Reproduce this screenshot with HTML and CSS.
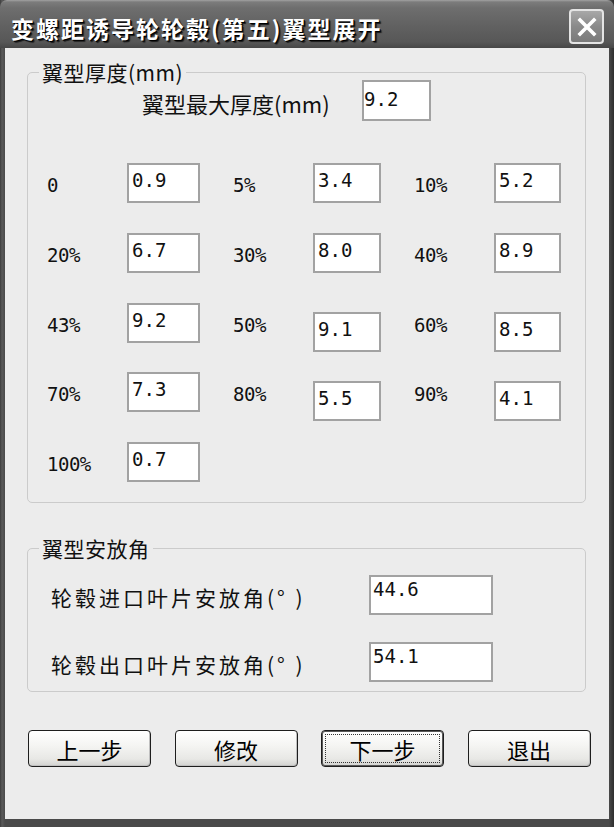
FILE: index.html
```html
<!DOCTYPE html>
<html lang="zh-CN">
<head>
<meta charset="utf-8">
<title>变螺距诱导轮轮毂(第五)翼型展开</title>
<link rel="stylesheet" href="styles.css">
</head>
<body>
<div class="window">
  <div class="titlebar">
    <span class="title">变螺距诱导轮轮毂(第五)翼型展开</span>
    <span class="close">
      <svg width="22" height="22" viewBox="0 0 22 22"><path d="M4 4 L18 18 M18 4 L4 18" stroke="#fff" stroke-width="3.6" stroke-linecap="square"/></svg>
    </span>
  </div>
  <div class="client">
    <div class="group">
      <div class="legend">翼型厚度(mm)</div>
      <div class="max-row">
        <span class="max-label">翼型最大厚度(mm)</span>
        <div class="field field-max">9.2</div>
      </div>
      <div class="grid">
        <span class="lbl">0</span><div class="field c1">0.9</div>
        <span class="lbl">5%</span><div class="field c2">3.4</div>
        <span class="lbl">10%</span><div class="field c3">5.2</div>

        <span class="lbl">20%</span><div class="field c1">6.7</div>
        <span class="lbl">30%</span><div class="field c2">8.0</div>
        <span class="lbl">40%</span><div class="field c3">8.9</div>

        <span class="lbl">43%</span><div class="field c1">9.2</div>
        <span class="lbl">50%</span><div class="field c2 low">9.1</div>
        <span class="lbl">60%</span><div class="field c3 low">8.5</div>

        <span class="lbl">70%</span><div class="field c1">7.3</div>
        <span class="lbl">80%</span><div class="field c2 low">5.5</div>
        <span class="lbl">90%</span><div class="field c3 low">4.1</div>

        <span class="lbl">100%</span><div class="field c1">0.7</div>
      </div>
    </div>

    <div class="group group-angle">
      <div class="legend">翼型安放角</div>
      <div class="angle-rows">
        <div class="angle-row">
          <span class="angle-label">轮毂进口叶片安放角(° )</span>
          <div class="field field-angle">44.6</div>
        </div>
        <div class="angle-row">
          <span class="angle-label">轮毂出口叶片安放角(° )</span>
          <div class="field field-angle">54.1</div>
        </div>
      </div>
    </div>

    <div class="buttons">
      <div class="btn"><span>上一步</span></div>
      <div class="btn"><span>修改</span></div>
      <div class="btn btn-default"><span>下一步</span></div>
      <div class="btn"><span>退出</span></div>
    </div>
  </div>
</div>
</body>
</html>
```

FILE: styles.css
```css
* { box-sizing: border-box; }

html, body {
  margin: 0;
  padding: 0;
}

body {
  width: 614px;
  height: 827px;
  overflow: hidden;
  background: #3a3a3a;
  font-family: "Noto Sans CJK SC", sans-serif;
  color: #111;
}

.window {
  width: 614px;
  height: 827px;
  display: flex;
  flex-direction: column;
  background: linear-gradient(to right, #3c3c3c 0, #5a5a5a 2px, #4a4a4a 5px, #4a4a4a 609px, #2e2e2e 614px);
}

.titlebar {
  height: 48px;
  flex: none;
  display: flex;
  align-items: flex-start;
  justify-content: space-between;
  padding: 0 10px 0 11px;
  background: linear-gradient(#a2a2a2 0, #7c7c7c 2px, #6e6e6e 8px, #616161 26px, #575757 42px, #474747 48px);
  border-radius: 7px 7px 0 0;
}

.title {
  margin-top: 14px;
  font-size: 23px;
  line-height: 28px;
  font-weight: 700;
  letter-spacing: 2px;
  color: #fff;
  text-shadow: 1px 1px 0 #000, 2px 2px 1px #1a1a1a;
  white-space: nowrap;
}

.close {
  margin-top: 9px;
  width: 35px;
  height: 35px;
  border: 2px solid #e4e4e4;
  border-radius: 4px;
  background: linear-gradient(#a8a8a8, #8a8a8a 50%, #7a7a7a);
  display: flex;
  align-items: center;
  justify-content: center;
}

.client {
  flex: 1;
  margin: 0 5px 8px;
  background: #ececec;
  padding: 24px 23px 0 22px;
}

.group {
  border: 1px solid #cbcbcb;
  border-radius: 5px;
}

.legend {
  width: fit-content;
  margin: -13px 0 0 11px;
  padding: 0 3px;
  background: #ececec;
  font-size: 21px;
  line-height: 24px;
  letter-spacing: 0.5px;
}

.max-row {
  display: flex;
  align-items: center;
  margin-top: -4px;
  padding-left: 114px;
}

.max-label {
  width: 220px;
  font-size: 22px;
  letter-spacing: 0;
  padding-top: 4px;
}

.field {
  background: #fff;
  border: 2px solid #a2a2a2;
  height: 40px;
  font-family: "DejaVu Sans Mono", monospace;
  font-size: 19px;
  line-height: 22px;
  padding: 4px 0 0 3px;
  color: #111;
  white-space: nowrap;
}

.field-max {
  width: 69px;
  height: 41px;
  padding: 6px 0 0 0;
}

.grid {
  display: grid;
  grid-template-columns: 80px 106px 80px 101px 80px 67px;
  grid-auto-rows: 40px;
  row-gap: 29.75px;
  margin-top: 42px;
  padding: 0 0 20px 19px;
}

.lbl {
  font-family: "DejaVu Sans Mono", monospace;
  font-size: 19px;
  line-height: 40px;
  padding-top: 2px;
  letter-spacing: -0.5px;
}

.c1 { width: 73px; }
.c2 { width: 68px; }
.c3 { width: 67px; }

.low {
  margin-top: 9px;
  margin-bottom: -9px;
}

.group-angle {
  margin-top: 45px;
}

.angle-rows {
  display: flex;
  flex-direction: column;
  gap: 27px;
  padding: 15px 0 9px;
}

.angle-row {
  display: flex;
  align-items: center;
  height: 40px;
  padding-left: 23px;
}

.angle-label {
  width: 318px;
  font-size: 21px;
  letter-spacing: 3px;
  padding-top: 4px;
  white-space: nowrap;
}

.field-angle {
  width: 124px;
  padding: 1px 0 0 2px;
}

.buttons {
  display: flex;
  gap: 23.5px;
  margin-top: 38px;
  padding-left: 1px;
}

.btn {
  flex: none;
  width: 123px;
  height: 37px;
  border: 1px solid #1e1e1e;
  border-radius: 4px;
  background: linear-gradient(#ffffff, #f5f5f3 40%, #e8e8e5 80%, #d2d2d0);
  box-shadow: inset -1px -1px 0 #c0c0c0;
  display: flex;
  padding: 3px;
  font-size: 22px;
  color: #000;
}

.btn span {
  flex: 1;
  display: flex;
  align-items: center;
  justify-content: center;
  border: 1px dotted transparent;
  line-height: 1;
}

.btn-default {
  box-shadow: inset 0 0 0 1px #5a5a5a;
}

.btn-default span {
  border-color: #333;
}
```
